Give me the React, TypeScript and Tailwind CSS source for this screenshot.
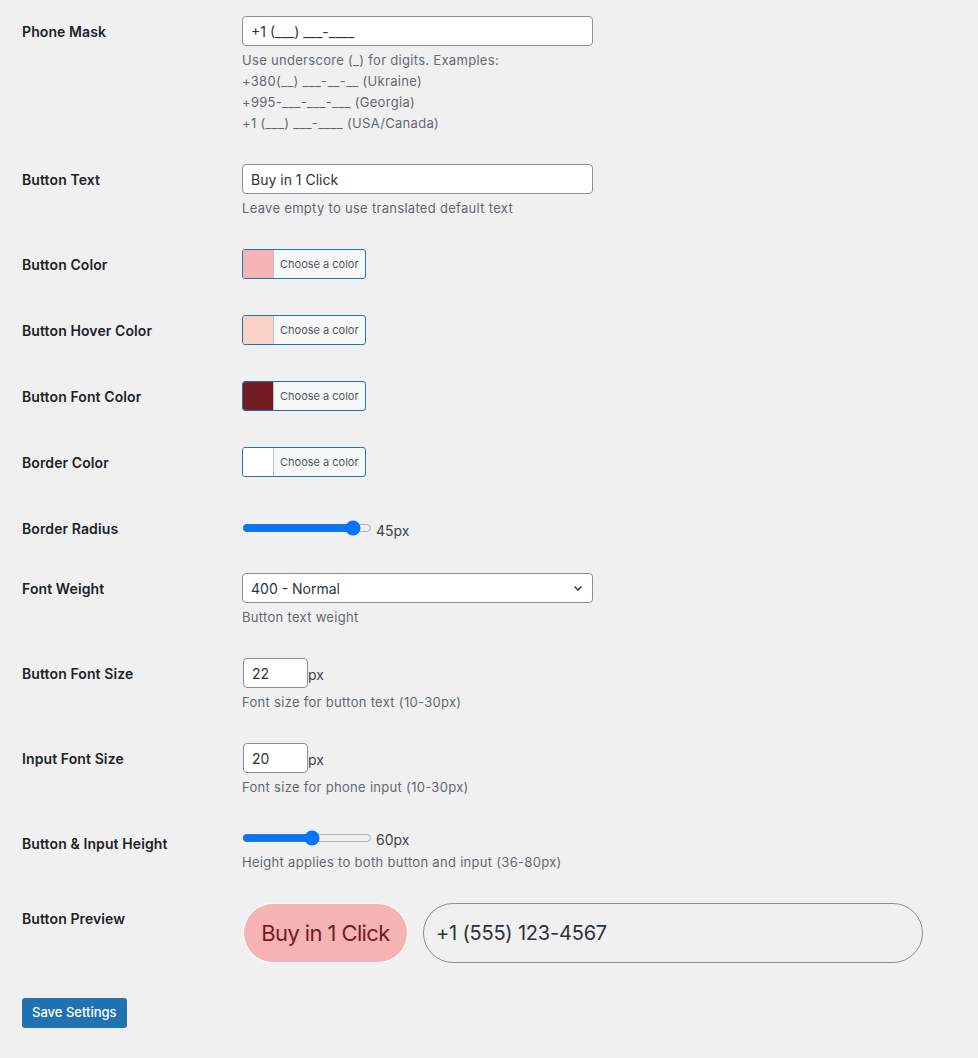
import { ReactNode, useState } from 'react'

const font = { fontFamily: 'Inter, "Noto Sans", sans-serif' }

function Row({ label, children }: { label: string; children: ReactNode }) {
  return (
    <div className="flex">
      <div className="w-[240px] shrink-0 pl-[22px] pt-[20px] text-[14px] font-semibold leading-[22px] tracking-[0.1px] text-[#1d2327]">
        {label}
      </div>
      <div className="flex-1 py-[15px] pl-[2px]">{children}</div>
    </div>
  )
}

function Desc({ children }: { children: ReactNode }) {
  return (
    <p className="mt-[4px] text-[13px] leading-[21px] tracking-[0.3px] text-[#646970]">{children}</p>
  )
}

function ColorPicker({ color }: { color: string }) {
  return (
    <button className="mb-[6px] flex h-[30px] w-[124px] overflow-hidden rounded-[3px] border border-[#2271b1] bg-[#f6f7f7]">
      <span className="h-full w-[30px] shrink-0" style={{ backgroundColor: color }} />
      <span className="flex h-full flex-1 items-center border-l border-[#c3c4c7] pl-[6px] text-[11px] text-[#50575e]">
        Choose a color
      </span>
    </button>
  )
}

const textInput =
  'h-[30px] rounded-[4px] border border-[#8c8f94] bg-white px-[8px] text-[14px] text-[#2c3338] outline-none'

export default function App() {
  const [radius, setRadius] = useState(45)
  const [height, setHeight] = useState(60)

  return (
    <div className="min-h-[1058px] bg-[#f0f0f1] pt-[1px] text-[#3c434a]" style={font}>
      <Row label="Phone Mask">
        <input className={`${textInput} w-[351px]`} defaultValue="+1 (___) ___-____" />
        <Desc>
          Use underscore (_) for digits. Examples:
          <br />
          +380(__) ___-__-__ (Ukraine)
          <br />
          +995-___-___-___ (Georgia)
          <br />
          +1 (___) ___-____ (USA/Canada)
        </Desc>
      </Row>

      <Row label="Button Text">
        <input className={`${textInput} w-[351px]`} defaultValue="Buy in 1 Click" />
        <Desc>Leave empty to use translated default text</Desc>
      </Row>

      <Row label="Button Color">
        <ColorPicker color="#f5b3b6" />
      </Row>
      <Row label="Button Hover Color">
        <ColorPicker color="#f9d1c5" />
      </Row>
      <Row label="Button Font Color">
        <ColorPicker color="#731c24" />
      </Row>
      <Row label="Border Color">
        <ColorPicker color="#ffffff" />
      </Row>

      <Row label="Border Radius">
        <div className="flex h-[30px] items-center gap-[4px]">
          <input
            type="range"
            min={0}
            max={50}
            value={radius}
            onChange={(e) => setRadius(Number(e.target.value))}
            className="w-[130px] accent-[#0075ff]"
          />
          <span className="mt-[4px] text-[14px] text-[#3c434a]">{radius}px</span>
        </div>
      </Row>

      <Row label="Font Weight">
        <div className="relative w-[351px]">
          <select
            className={`${textInput} w-full appearance-none pr-[28px]`}
            defaultValue="400"
          >
            <option value="400">400 - Normal</option>
            <option value="500">500 - Medium</option>
            <option value="600">600 - Semi Bold</option>
            <option value="700">700 - Bold</option>
          </select>
          <svg
            className="pointer-events-none absolute right-[8px] top-[8px] h-[14px] w-[14px] text-[#2c3338]"
            viewBox="0 0 20 20"
            fill="none"
            stroke="currentColor"
            strokeWidth={2}
          >
            <path d="M5 8l5 5 5-5" />
          </svg>
        </div>
        <Desc>Button text weight</Desc>
      </Row>

      <Row label="Button Font Size">
        <div className="flex items-end pl-[1px]">
          <input type="number" className={`${textInput} w-[65px] pl-[8px] pr-0`} defaultValue={22} />
          <span className="mb-[2px] text-[14px] leading-[22px] text-[#3c434a]">px</span>
        </div>
        <Desc>Font size for button text (10-30px)</Desc>
      </Row>

      <Row label="Input Font Size">
        <div className="flex items-end pl-[1px]">
          <input type="number" className={`${textInput} w-[65px] pl-[8px] pr-0`} defaultValue={20} />
          <span className="mb-[2px] text-[14px] leading-[22px] text-[#3c434a]">px</span>
        </div>
        <Desc>Font size for phone input (10-30px)</Desc>
      </Row>

      <Row label="Button & Input Height">
        <div className="flex h-[20px] items-center gap-[4px]">
          <input
            type="range"
            min={36}
            max={80}
            value={height}
            onChange={(e) => setHeight(Number(e.target.value))}
            className="w-[130px] accent-[#0075ff]"
          />
          <span className="mt-[2px] text-[14px] text-[#3c434a]">{height}px</span>
        </div>
        <Desc>Height applies to both button and input (36-80px)</Desc>
      </Row>

      <Row label="Button Preview">
        <div className="flex items-center gap-[15px] pl-[1px]">
          <button className="h-[60px] w-[165px] rounded-[45px] border border-white bg-[#f5b3b6] text-[22px] tracking-[-0.6px] text-[#731c24]">
            Buy in 1 Click
          </button>
          <input
            className="h-[60px] w-[500px] rounded-[30px] border border-[#8c8f94] bg-transparent pl-[12px] text-[20px] tracking-[-0.2px] text-[#2c3338] outline-none"
            defaultValue="+1 (555) 123-4567"
          />
        </div>
      </Row>

      <div className="pl-[22px] pt-[20px]">
        <button className="h-[30px] rounded-[3px] bg-[#2271b1] px-[10px] text-[13px] font-medium text-white">
          Save Settings
        </button>
      </div>
    </div>
  )
}
